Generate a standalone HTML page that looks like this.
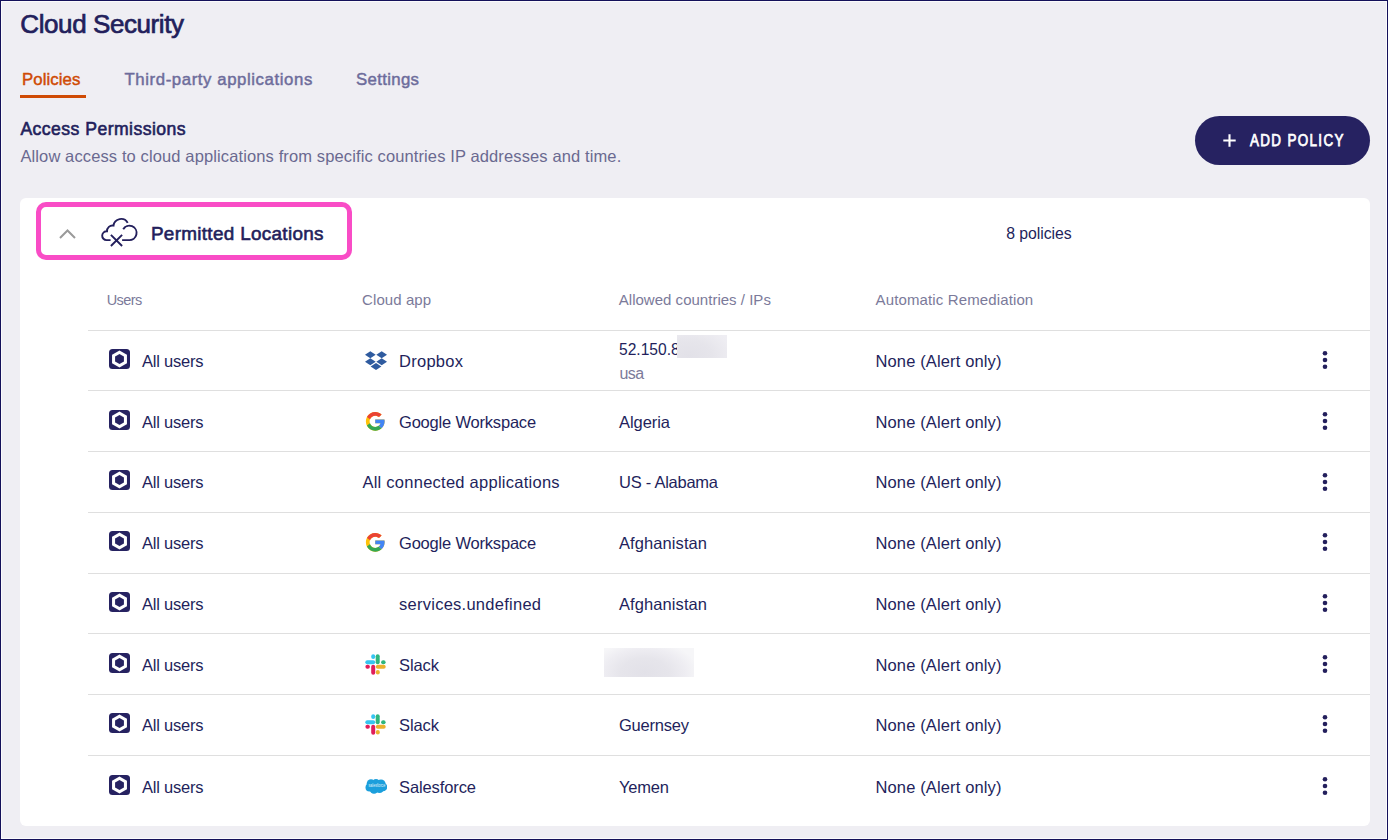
<!DOCTYPE html>
<html><head><meta charset="utf-8"><style>
html,body{margin:0;padding:0}
body{width:1388px;height:840px;position:relative;overflow:hidden;background:#efeef3;font-family:"Liberation Sans",sans-serif}
.frame{position:absolute;left:0;top:0;width:1388px;height:840px;box-sizing:border-box;border:1px solid #14105a;box-shadow:inset 0 0 0 1px rgba(255,255,255,.75);pointer-events:none;z-index:10}
.t{position:absolute;white-space:nowrap}
svg{display:block}
</style></head><body>
<div class="t" style="left:20.35px;top:10.79px;font-size:26px;line-height:26px;color:#231f5c;letter-spacing:-0.421px;-webkit-text-stroke:0.7px #231f5c;">Cloud Security</div>
<div class="t" style="left:22.12px;top:72.28px;font-size:16.8px;line-height:16.8px;color:#cf4a04;letter-spacing:0.065px;-webkit-text-stroke:0.45px #cf4a04;">Policies</div>
<div class="t" style="left:124.52px;top:72.28px;font-size:16.8px;line-height:16.8px;color:#6d6c9b;letter-spacing:0.580px;-webkit-text-stroke:0.45px #6d6c9b;">Third-party applications</div>
<div class="t" style="left:356.03px;top:72.28px;font-size:16.8px;line-height:16.8px;color:#6d6c9b;letter-spacing:0.336px;-webkit-text-stroke:0.45px #6d6c9b;">Settings</div>
<div style="position:absolute;left:20px;top:95px;width:66px;height:3px;background:#cf4a04"></div>
<div class="t" style="left:20.40px;top:120.90px;font-size:17.6px;line-height:17.6px;color:#231f5c;letter-spacing:0.461px;-webkit-text-stroke:0.6px #231f5c;">Access Permissions</div>
<div class="t" style="left:20.40px;top:147.63px;font-size:16.5px;line-height:16.5px;color:#6a6990;letter-spacing:0.120px;">Allow access to cloud applications from specific countries IP addresses and time.</div>
<div style="position:absolute;left:1195px;top:116px;width:175px;height:49px;border-radius:25px;background:#262261"></div>
<svg style="position:absolute;left:1223px;top:134px" width="13" height="13" viewBox="0 0 13 13"><path d="M6.5 0.3V12.7M0.3 6.5H12.7" stroke="#fff" stroke-width="2.1"/></svg>
<div class="t" style="left:1250.38px;top:133.23px;font-size:15.8px;line-height:15.8px;color:#fff;letter-spacing:1.582px;transform:scaleX(0.85);transform-origin:0 0;-webkit-text-stroke:0.75px #fff;">ADD POLICY</div>
<div style="position:absolute;left:20px;top:198px;width:1350px;height:628px;border-radius:6px;background:#fff"></div>
<div style="position:absolute;left:36px;top:202px;width:316px;height:58px;box-sizing:border-box;border:5px solid #f94cc6;border-radius:10px"></div>
<svg style="position:absolute;left:57px;top:226px" width="21" height="15" viewBox="0 0 21 15"><path d="M3 12L10.5 4.5L18 12" fill="none" stroke="#9a9a9a" stroke-width="2"/></svg>
<svg style="position:absolute;left:90px;top:210px" width="60" height="45" viewBox="0 0 60 45">
<g fill="none" stroke="#231f5c" stroke-width="1.9">
<path d="M20.6 30.1H16.6A4.4 4.4 0 1 1 17.0 21.32A5.5 5.5 0 0 1 23.5 15.6A7.6 7.6 0 0 1 37.7 12.9"/>
<path d="M33.2 19.2A7.2 7.2 0 1 1 38.9 30.1H32.1"/>
<path d="M20.9 24.8L32.1 36M32.1 24.8L20.9 36"/>
</g></svg>
<div class="t" style="left:150.90px;top:224.80px;font-size:18.9px;line-height:18.9px;color:#231f5c;letter-spacing:0.315px;-webkit-text-stroke:0.6px #231f5c;">Permitted Locations</div>
<div class="t" style="left:1006.30px;top:226.03px;font-size:15.8px;line-height:15.8px;color:#231f5c;letter-spacing:-0.063px;">8 policies</div>
<div class="t" style="left:106.70px;top:292.71px;font-size:14.515511298353122px;line-height:14.515511298353122px;color:#7b7a9a;letter-spacing:-0.600px;">Users</div>
<div class="t" style="left:362.10px;top:292.30px;font-size:15px;line-height:15px;color:#7b7a9a;letter-spacing:0.077px;">Cloud app</div>
<div class="t" style="left:618.80px;top:292.30px;font-size:15px;line-height:15px;color:#7b7a9a;letter-spacing:0.016px;">Allowed countries / IPs</div>
<div class="t" style="left:875.60px;top:292.30px;font-size:15px;line-height:15px;color:#7b7a9a;letter-spacing:0.127px;">Automatic Remediation</div>
<div style="position:absolute;left:88px;top:329.5px;width:1282px;height:1px;background:#dfdfdf"></div>
<div style="position:absolute;left:88px;top:390.0px;width:1282px;height:1px;background:#dfdfdf"></div>
<div style="position:absolute;left:88px;top:451.0px;width:1282px;height:1px;background:#dfdfdf"></div>
<div style="position:absolute;left:88px;top:511.5px;width:1282px;height:1px;background:#dfdfdf"></div>
<div style="position:absolute;left:88px;top:572.5px;width:1282px;height:1px;background:#dfdfdf"></div>
<div style="position:absolute;left:88px;top:632.5px;width:1282px;height:1px;background:#dfdfdf"></div>
<div style="position:absolute;left:88px;top:694.0px;width:1282px;height:1px;background:#dfdfdf"></div>
<div style="position:absolute;left:88px;top:755.0px;width:1282px;height:1px;background:#dfdfdf"></div>
<svg style="position:absolute;left:109px;top:348.7px" width="21" height="20" viewBox="0 0 21 20"><rect x="0" y="0" width="21" height="20" rx="3.5" fill="#262261"/><path d="M10.50 1.40L17.95 5.70L17.95 14.30L10.50 18.60L3.05 14.30L3.05 5.70Z" fill="#fff"/><path d="M10.50 4.90L14.92 7.45L14.92 12.55L10.50 15.10L6.08 12.55L6.08 7.45Z" fill="#262261"/></svg>
<div class="t" style="left:141.90px;top:352.73px;font-size:16.5px;line-height:16.5px;color:#231f5c;letter-spacing:-0.210px;">All users</div>
<svg style="position:absolute;left:364.7px;top:350.6px" width="22" height="20" viewBox="0 0 22 20"><g fill="#2f5b9f"><path d="M5.3 0.3L10.7 3.8L5.3 7.3L0 3.8Z"/><path d="M16.7 0.3L22 3.8L16.7 7.3L11.3 3.8Z"/><path d="M5.3 7.3L10.7 10.8L5.3 14.3L0 10.8Z"/><path d="M16.7 7.3L22 10.8L16.7 14.3L11.3 10.8Z"/><path d="M11 12.1L16.4 15.6L11 19.0L5.6 15.6Z"/></g></svg>
<div class="t" style="left:399.00px;top:352.73px;font-size:16.5px;line-height:16.5px;color:#231f5c;letter-spacing:0.272px;">Dropbox</div>
<div class="t" style="left:619.00px;top:342.19px;font-size:15.6px;line-height:15.6px;color:#231f5c;letter-spacing:0.000px;">52.150.8</div>
<div style="position:absolute;left:677px;top:335px;width:50px;height:23px;background:radial-gradient(ellipse 90% 130% at 25% 90%,#e2e1e8 0%,#e6e5eb 50%,#efeef3 100%)"></div>
<div class="t" style="left:619.40px;top:365.66px;font-size:16px;line-height:16px;color:#7b7a9a;letter-spacing:-0.554px;">usa</div>
<div class="t" style="left:875.50px;top:352.73px;font-size:16.5px;line-height:16.5px;color:#231f5c;letter-spacing:0.138px;">None (Alert only)</div>
<svg style="position:absolute;left:1321px;top:350.1px" width="8" height="20" viewBox="0 0 8 20"><g fill="#231f5c"><circle cx="4" cy="3.2" r="2.3"/><circle cx="4" cy="10" r="2.3"/><circle cx="4" cy="16.8" r="2.3"/></g></svg>
<svg style="position:absolute;left:109px;top:410.0px" width="21" height="20" viewBox="0 0 21 20"><rect x="0" y="0" width="21" height="20" rx="3.5" fill="#262261"/><path d="M10.50 1.40L17.95 5.70L17.95 14.30L10.50 18.60L3.05 14.30L3.05 5.70Z" fill="#fff"/><path d="M10.50 4.90L14.92 7.45L14.92 12.55L10.50 15.10L6.08 12.55L6.08 7.45Z" fill="#262261"/></svg>
<div class="t" style="left:141.90px;top:414.03px;font-size:16.5px;line-height:16.5px;color:#231f5c;letter-spacing:-0.210px;">All users</div>
<svg style="position:absolute;left:364.2px;top:410.1px" width="22.5" height="22.5" viewBox="0 0 48 48"><path fill="#FFC107" d="M43.6 20H24v8h11.3C33.7 32.7 29.3 36 24 36c-6.6 0-12-5.4-12-12s5.4-12 12-12c3.1 0 5.8 1.2 7.9 3.1l5.7-5.7C34 6.1 29.3 4 24 4 12.9 4 4 12.9 4 24s8.9 20 20 20 20-8.9 20-20c0-1.3-.1-2.7-.4-4z"/><path fill="#EA4335" d="M6.3 14.7l6.6 4.8C14.7 15.1 19 12 24 12c3.1 0 5.8 1.2 7.9 3.1l5.7-5.7C34 6.1 29.3 4 24 4 16.3 4 9.7 8.3 6.3 14.7z"/><path fill="#34A853" d="M24 44c5.2 0 9.9-2 13.4-5.2l-6.2-5.2c-2 1.5-4.5 2.4-7.2 2.4-5.2 0-9.6-3.3-11.3-8l-6.5 5C9.5 39.6 16.2 44 24 44z"/><path fill="#4285F4" d="M43.6 20H24v8h11.3c-.8 2.2-2.2 4.2-4.1 5.6l6.2 5.2C37 39.2 44 34 44 24c0-1.3-.1-2.7-.4-4z"/></svg>
<div class="t" style="left:399.00px;top:414.03px;font-size:16.5px;line-height:16.5px;color:#231f5c;letter-spacing:-0.195px;">Google Workspace</div>
<div class="t" style="left:619.00px;top:414.03px;font-size:16.5px;line-height:16.5px;color:#231f5c;letter-spacing:-0.064px;">Algeria</div>
<div class="t" style="left:875.50px;top:414.03px;font-size:16.5px;line-height:16.5px;color:#231f5c;letter-spacing:0.138px;">None (Alert only)</div>
<svg style="position:absolute;left:1321px;top:411.4px" width="8" height="20" viewBox="0 0 8 20"><g fill="#231f5c"><circle cx="4" cy="3.2" r="2.3"/><circle cx="4" cy="10" r="2.3"/><circle cx="4" cy="16.8" r="2.3"/></g></svg>
<svg style="position:absolute;left:109px;top:470.2px" width="21" height="20" viewBox="0 0 21 20"><rect x="0" y="0" width="21" height="20" rx="3.5" fill="#262261"/><path d="M10.50 1.40L17.95 5.70L17.95 14.30L10.50 18.60L3.05 14.30L3.05 5.70Z" fill="#fff"/><path d="M10.50 4.90L14.92 7.45L14.92 12.55L10.50 15.10L6.08 12.55L6.08 7.45Z" fill="#262261"/></svg>
<div class="t" style="left:141.90px;top:474.23px;font-size:16.5px;line-height:16.5px;color:#231f5c;letter-spacing:-0.210px;">All users</div>
<div class="t" style="left:362.40px;top:474.23px;font-size:16.5px;line-height:16.5px;color:#231f5c;letter-spacing:0.256px;">All connected applications</div>
<div class="t" style="left:619.00px;top:474.23px;font-size:16.5px;line-height:16.5px;color:#231f5c;letter-spacing:-0.255px;">US - Alabama</div>
<div class="t" style="left:875.50px;top:474.23px;font-size:16.5px;line-height:16.5px;color:#231f5c;letter-spacing:0.138px;">None (Alert only)</div>
<svg style="position:absolute;left:1321px;top:471.6px" width="8" height="20" viewBox="0 0 8 20"><g fill="#231f5c"><circle cx="4" cy="3.2" r="2.3"/><circle cx="4" cy="10" r="2.3"/><circle cx="4" cy="16.8" r="2.3"/></g></svg>
<svg style="position:absolute;left:109px;top:530.8px" width="21" height="20" viewBox="0 0 21 20"><rect x="0" y="0" width="21" height="20" rx="3.5" fill="#262261"/><path d="M10.50 1.40L17.95 5.70L17.95 14.30L10.50 18.60L3.05 14.30L3.05 5.70Z" fill="#fff"/><path d="M10.50 4.90L14.92 7.45L14.92 12.55L10.50 15.10L6.08 12.55L6.08 7.45Z" fill="#262261"/></svg>
<div class="t" style="left:141.90px;top:534.83px;font-size:16.5px;line-height:16.5px;color:#231f5c;letter-spacing:-0.210px;">All users</div>
<svg style="position:absolute;left:364.2px;top:530.9px" width="22.5" height="22.5" viewBox="0 0 48 48"><path fill="#FFC107" d="M43.6 20H24v8h11.3C33.7 32.7 29.3 36 24 36c-6.6 0-12-5.4-12-12s5.4-12 12-12c3.1 0 5.8 1.2 7.9 3.1l5.7-5.7C34 6.1 29.3 4 24 4 12.9 4 4 12.9 4 24s8.9 20 20 20 20-8.9 20-20c0-1.3-.1-2.7-.4-4z"/><path fill="#EA4335" d="M6.3 14.7l6.6 4.8C14.7 15.1 19 12 24 12c3.1 0 5.8 1.2 7.9 3.1l5.7-5.7C34 6.1 29.3 4 24 4 16.3 4 9.7 8.3 6.3 14.7z"/><path fill="#34A853" d="M24 44c5.2 0 9.9-2 13.4-5.2l-6.2-5.2c-2 1.5-4.5 2.4-7.2 2.4-5.2 0-9.6-3.3-11.3-8l-6.5 5C9.5 39.6 16.2 44 24 44z"/><path fill="#4285F4" d="M43.6 20H24v8h11.3c-.8 2.2-2.2 4.2-4.1 5.6l6.2 5.2C37 39.2 44 34 44 24c0-1.3-.1-2.7-.4-4z"/></svg>
<div class="t" style="left:399.00px;top:534.83px;font-size:16.5px;line-height:16.5px;color:#231f5c;letter-spacing:-0.195px;">Google Workspace</div>
<div class="t" style="left:619.00px;top:534.83px;font-size:16.5px;line-height:16.5px;color:#231f5c;letter-spacing:0.085px;">Afghanistan</div>
<div class="t" style="left:875.50px;top:534.83px;font-size:16.5px;line-height:16.5px;color:#231f5c;letter-spacing:0.138px;">None (Alert only)</div>
<svg style="position:absolute;left:1321px;top:532.2px" width="8" height="20" viewBox="0 0 8 20"><g fill="#231f5c"><circle cx="4" cy="3.2" r="2.3"/><circle cx="4" cy="10" r="2.3"/><circle cx="4" cy="16.8" r="2.3"/></g></svg>
<svg style="position:absolute;left:109px;top:591.8px" width="21" height="20" viewBox="0 0 21 20"><rect x="0" y="0" width="21" height="20" rx="3.5" fill="#262261"/><path d="M10.50 1.40L17.95 5.70L17.95 14.30L10.50 18.60L3.05 14.30L3.05 5.70Z" fill="#fff"/><path d="M10.50 4.90L14.92 7.45L14.92 12.55L10.50 15.10L6.08 12.55L6.08 7.45Z" fill="#262261"/></svg>
<div class="t" style="left:141.90px;top:595.83px;font-size:16.5px;line-height:16.5px;color:#231f5c;letter-spacing:-0.210px;">All users</div>
<div class="t" style="left:399.00px;top:595.83px;font-size:16.5px;line-height:16.5px;color:#231f5c;letter-spacing:0.260px;">services.undefined</div>
<div class="t" style="left:619.00px;top:595.83px;font-size:16.5px;line-height:16.5px;color:#231f5c;letter-spacing:0.085px;">Afghanistan</div>
<div class="t" style="left:875.50px;top:595.83px;font-size:16.5px;line-height:16.5px;color:#231f5c;letter-spacing:0.138px;">None (Alert only)</div>
<svg style="position:absolute;left:1321px;top:593.2px" width="8" height="20" viewBox="0 0 8 20"><g fill="#231f5c"><circle cx="4" cy="3.2" r="2.3"/><circle cx="4" cy="10" r="2.3"/><circle cx="4" cy="16.8" r="2.3"/></g></svg>
<svg style="position:absolute;left:109px;top:653.0px" width="21" height="20" viewBox="0 0 21 20"><rect x="0" y="0" width="21" height="20" rx="3.5" fill="#262261"/><path d="M10.50 1.40L17.95 5.70L17.95 14.30L10.50 18.60L3.05 14.30L3.05 5.70Z" fill="#fff"/><path d="M10.50 4.90L14.92 7.45L14.92 12.55L10.50 15.10L6.08 12.55L6.08 7.45Z" fill="#262261"/></svg>
<div class="t" style="left:141.90px;top:657.03px;font-size:16.5px;line-height:16.5px;color:#231f5c;letter-spacing:-0.210px;">All users</div>
<svg style="position:absolute;left:365px;top:653.9px" width="21" height="21" viewBox="0 0 21 21"><g stroke-linecap="round" stroke-width="4" fill="none">
<path d="M8.2 2.3V3.0" stroke="#36C5F0"/><path d="M2.3 8.3H8.2" stroke="#36C5F0"/>
<path d="M12.7 2.3V8.2" stroke="#2EB67D"/><path d="M18.6 8.3H18.1" stroke="#2EB67D"/>
<path d="M2.4 12.8H2.9" stroke="#E01E5A"/><path d="M8.2 12.8V18.7" stroke="#E01E5A"/>
<path d="M12.8 12.8H18.7" stroke="#ECB22E"/><path d="M12.8 18.6V18.1" stroke="#ECB22E"/></g></svg>
<div class="t" style="left:399.00px;top:657.03px;font-size:16.5px;line-height:16.5px;color:#231f5c;letter-spacing:-0.094px;">Slack</div>
<div style="position:absolute;left:604px;top:648px;width:90px;height:29px;background:radial-gradient(ellipse 60% 110% at 45% 85%,#e2e1e8 0%,#e6e5eb 45%,#eeedf2 75%,#f6f6f8 100%)"></div>
<div class="t" style="left:875.50px;top:657.03px;font-size:16.5px;line-height:16.5px;color:#231f5c;letter-spacing:0.138px;">None (Alert only)</div>
<svg style="position:absolute;left:1321px;top:654.4px" width="8" height="20" viewBox="0 0 8 20"><g fill="#231f5c"><circle cx="4" cy="3.2" r="2.3"/><circle cx="4" cy="10" r="2.3"/><circle cx="4" cy="16.8" r="2.3"/></g></svg>
<svg style="position:absolute;left:109px;top:713.0px" width="21" height="20" viewBox="0 0 21 20"><rect x="0" y="0" width="21" height="20" rx="3.5" fill="#262261"/><path d="M10.50 1.40L17.95 5.70L17.95 14.30L10.50 18.60L3.05 14.30L3.05 5.70Z" fill="#fff"/><path d="M10.50 4.90L14.92 7.45L14.92 12.55L10.50 15.10L6.08 12.55L6.08 7.45Z" fill="#262261"/></svg>
<div class="t" style="left:141.90px;top:717.03px;font-size:16.5px;line-height:16.5px;color:#231f5c;letter-spacing:-0.210px;">All users</div>
<svg style="position:absolute;left:365px;top:713.9px" width="21" height="21" viewBox="0 0 21 21"><g stroke-linecap="round" stroke-width="4" fill="none">
<path d="M8.2 2.3V3.0" stroke="#36C5F0"/><path d="M2.3 8.3H8.2" stroke="#36C5F0"/>
<path d="M12.7 2.3V8.2" stroke="#2EB67D"/><path d="M18.6 8.3H18.1" stroke="#2EB67D"/>
<path d="M2.4 12.8H2.9" stroke="#E01E5A"/><path d="M8.2 12.8V18.7" stroke="#E01E5A"/>
<path d="M12.8 12.8H18.7" stroke="#ECB22E"/><path d="M12.8 18.6V18.1" stroke="#ECB22E"/></g></svg>
<div class="t" style="left:399.00px;top:717.03px;font-size:16.5px;line-height:16.5px;color:#231f5c;letter-spacing:-0.094px;">Slack</div>
<div class="t" style="left:619.00px;top:717.03px;font-size:16.5px;line-height:16.5px;color:#231f5c;letter-spacing:-0.218px;">Guernsey</div>
<div class="t" style="left:875.50px;top:717.03px;font-size:16.5px;line-height:16.5px;color:#231f5c;letter-spacing:0.138px;">None (Alert only)</div>
<svg style="position:absolute;left:1321px;top:714.4px" width="8" height="20" viewBox="0 0 8 20"><g fill="#231f5c"><circle cx="4" cy="3.2" r="2.3"/><circle cx="4" cy="10" r="2.3"/><circle cx="4" cy="16.8" r="2.3"/></g></svg>
<svg style="position:absolute;left:109px;top:774.9px" width="21" height="20" viewBox="0 0 21 20"><rect x="0" y="0" width="21" height="20" rx="3.5" fill="#262261"/><path d="M10.50 1.40L17.95 5.70L17.95 14.30L10.50 18.60L3.05 14.30L3.05 5.70Z" fill="#fff"/><path d="M10.50 4.90L14.92 7.45L14.92 12.55L10.50 15.10L6.08 12.55L6.08 7.45Z" fill="#262261"/></svg>
<div class="t" style="left:141.90px;top:778.93px;font-size:16.5px;line-height:16.5px;color:#231f5c;letter-spacing:-0.210px;">All users</div>
<svg style="position:absolute;left:364.5px;top:778.0px" width="22.5" height="16.5" viewBox="0 0 22.5 16.5"><g fill="#1b9fdc"><circle cx="6" cy="5.5" r="4.3"/><circle cx="11" cy="4.6" r="3.6"/><circle cx="16" cy="6" r="4.6"/><circle cx="4.5" cy="9.5" r="4"/><circle cx="9" cy="11.5" r="4.3"/><circle cx="14.5" cy="10.5" r="4.5"/><circle cx="18" cy="9" r="4.3"/></g><text x="3.4" y="9.4" font-size="5" textLength="16.9" lengthAdjust="spacingAndGlyphs" fill="#fff" font-family="Liberation Sans" opacity=".85">salesforce</text></svg>
<div class="t" style="left:399.00px;top:778.93px;font-size:16.5px;line-height:16.5px;color:#231f5c;letter-spacing:-0.107px;">Salesforce</div>
<div class="t" style="left:619.00px;top:778.93px;font-size:16.5px;line-height:16.5px;color:#231f5c;letter-spacing:-0.193px;">Yemen</div>
<div class="t" style="left:875.50px;top:778.93px;font-size:16.5px;line-height:16.5px;color:#231f5c;letter-spacing:0.138px;">None (Alert only)</div>
<svg style="position:absolute;left:1321px;top:776.3px" width="8" height="20" viewBox="0 0 8 20"><g fill="#231f5c"><circle cx="4" cy="3.2" r="2.3"/><circle cx="4" cy="10" r="2.3"/><circle cx="4" cy="16.8" r="2.3"/></g></svg>
<div class="frame"></div>
</body></html>
